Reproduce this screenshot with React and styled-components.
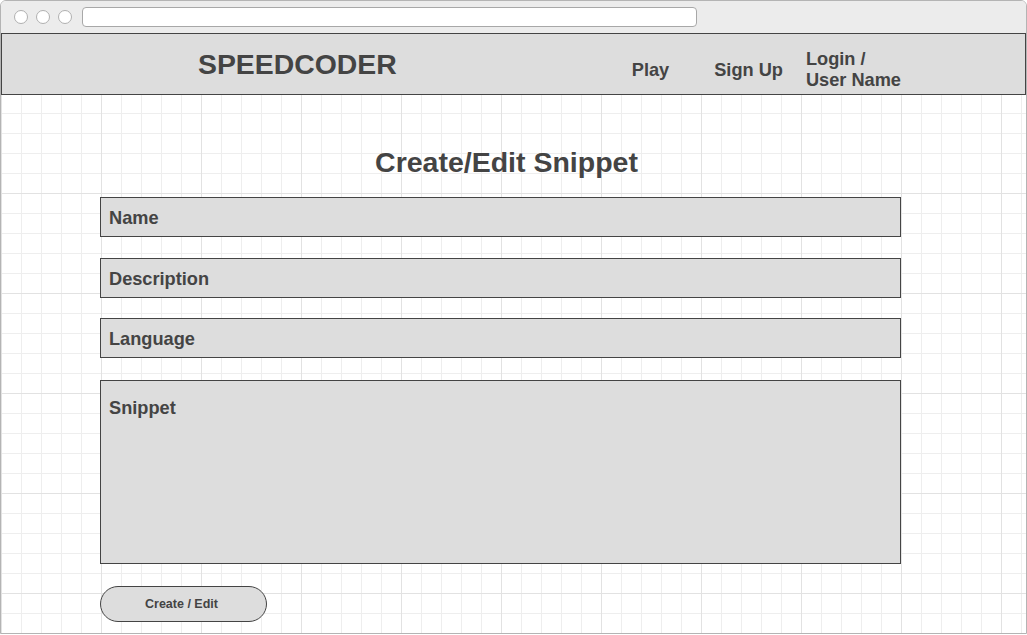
import styled, { createGlobalStyle } from 'styled-components';

const GlobalStyle = createGlobalStyle`
  html, body {
    margin: 0;
    padding: 0;
    background: #ffffff;
    font-family: "Liberation Sans", Arial, sans-serif;
  }
  * {
    box-sizing: border-box;
  }
`;

const Window = styled.div`
  width: 1027px;
  height: 634px;
  border: 1px solid #b4b4b4;
  border-radius: 6px 6px 0 0;
  display: flex;
  flex-direction: column;
  overflow: hidden;
  background: #ffffff;
`;

const TitleBar = styled.div`
  height: 32px;
  background: #ececec;
  display: flex;
  align-items: center;
  padding-left: 13px;
  gap: 8px;
`;

const Dot = styled.span`
  width: 14px;
  height: 14px;
  border-radius: 50%;
  background: #ffffff;
  border: 1px solid #b0b0b0;
`;

const AddressBar = styled.div`
  margin-left: 2px;
  width: 615px;
  height: 20px;
  background: #ffffff;
  border: 1px solid #a8a8a8;
  border-radius: 4px;
`;

const Header = styled.header`
  height: 62px;
  background: #dddddd;
  border: 1px solid #444444;
  display: flex;
  align-items: center;
  color: #444444;
`;

const Logo = styled.div`
  margin-left: 196px;
  font-size: 28.4px;
  font-weight: bold;
`;

const NavLink = styled.div`
  margin-left: ${p => p.$gap}px;
  font-size: 18.2px;
  font-weight: bold;
  line-height: 21px;
  margin-top: 12px;
`;

const Content = styled.main`
  flex: 1;
  padding-left: 99px;
  background-color: #ffffff;
  background-image:
    linear-gradient(to right, #e2e2e2 1px, transparent 1px),
    linear-gradient(to bottom, #e2e2e2 1px, transparent 1px),
    linear-gradient(to right, #eeeeee 1px, transparent 1px),
    linear-gradient(to bottom, #eeeeee 1px, transparent 1px);
  background-size: 100px 100px, 100px 100px, 20px 20px, 20px 20px;
  background-position: 0 -2px, 0 -2px, 0 -2px, 0 -2px;
`;

const Form = styled.div`
  width: 801px;
  display: flex;
  flex-direction: column;
`;

const Title = styled.h1`
  margin: 52px 0 19px 12px;
  text-align: center;
  font-size: 28.5px;
  line-height: 31px;
  font-weight: bold;
  color: #444444;
`;

const Field = styled.div`
  height: ${p => p.$height || 40}px;
  margin-bottom: ${p => p.$after || 0}px;
  background: #dddddd;
  border: 1px solid #444444;
  padding: ${p => (p.$tall ? '17px 8px 0' : '2px 8px 0')};
  display: flex;
  align-items: ${p => (p.$tall ? 'flex-start' : 'center')};
  font-size: 18.2px;
  font-weight: bold;
  color: #444444;
`;

const SubmitButton = styled.button`
  width: 167px;
  height: 36px;
  border: 1px solid #444444;
  border-radius: 18px;
  background: #dddddd;
  color: #444444;
  font-family: "Liberation Sans", Arial, sans-serif;
  font-size: 12.5px;
  font-weight: bold;
  padding: 0 4px 0 0;
`;

export default function App() {
  return (
    <>
      <GlobalStyle />
      <Window>
        <TitleBar>
          <Dot />
          <Dot />
          <Dot />
          <AddressBar />
        </TitleBar>
        <Header>
          <Logo>SPEEDCODER</Logo>
          <NavLink $gap={235}>Play</NavLink>
          <NavLink $gap={45}>Sign Up</NavLink>
          <NavLink $gap={23}>Login /<br />User Name</NavLink>
        </Header>
        <Content>
          <Form>
            <Title>Create/Edit Snippet</Title>
            <Field $after={21}>Name</Field>
            <Field $after={20}>Description</Field>
            <Field $after={22}>Language</Field>
            <Field $tall $height={184} $after={22}>Snippet</Field>
            <div>
              <SubmitButton>Create / Edit</SubmitButton>
            </div>
          </Form>
        </Content>
      </Window>
    </>
  );
}
